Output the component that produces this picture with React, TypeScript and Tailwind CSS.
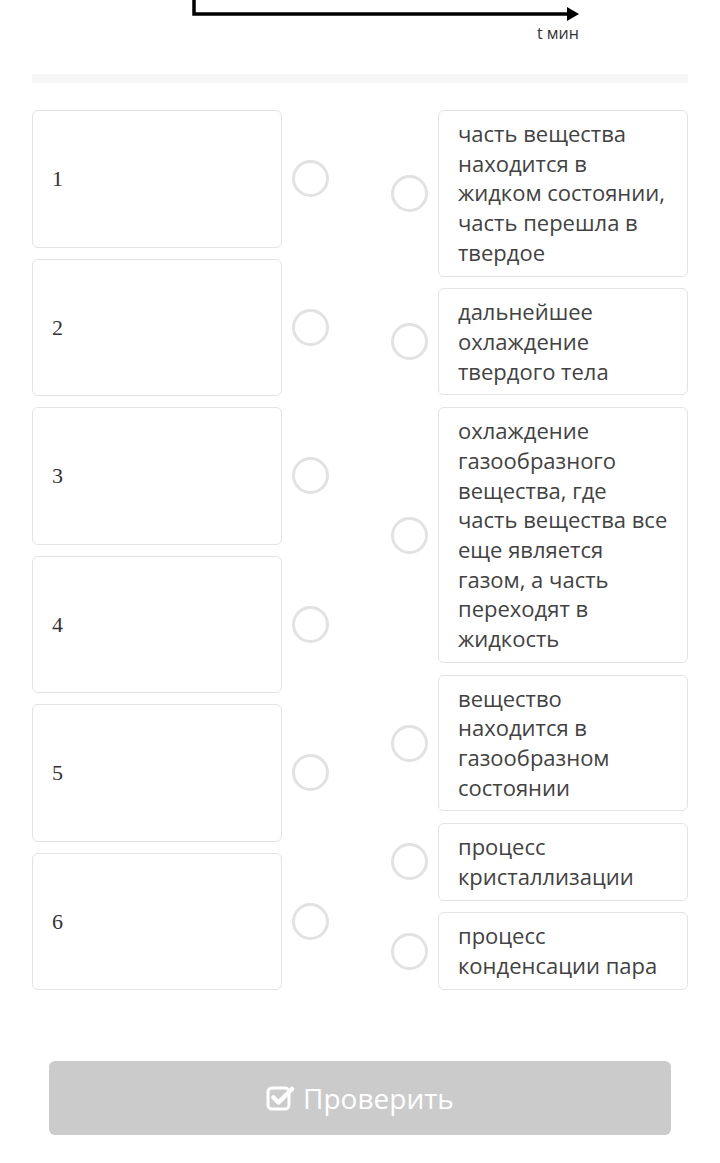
import React from 'react'

const left = ['1', '2', '3', '4', '5', '6']

const right = [
  'часть вещества находится в жидком состоянии, часть перешла в твердое',
  'дальнейшее охлаждение твердого тела',
  'охлаждение газообразного вещества, где часть вещества все еще является газом, а часть переходят в жидкость',
  'вещество находится в газообразном состоянии',
  'процесс кристаллизации',
  'процесс конденсации пара',
]

function Dot() {
  return <div className="h-[37px] w-[37px] shrink-0 rounded-full border-[3px] border-[#e1e3e2] bg-white" />
}

function CheckSquare() {
  return (
    <svg width="29" height="27" viewBox="0 0 29 27" fill="none">
      <rect x="2" y="3" width="21" height="21" rx="4" stroke="white" strokeWidth="3" />
      <path d="M7.5 12.5 L12.5 17.5 L26 4" stroke="white" strokeWidth="4.5" strokeLinecap="round" strokeLinejoin="round" />
    </svg>
  )
}

export default function App() {
  return (
    <div className="relative h-[1163px] w-[720px] overflow-hidden bg-white" style={{ fontFamily: '"Open Sans", "Liberation Sans", sans-serif' }}>
      {/* graph axis tail */}
      <div className="relative h-[74px]">
        <svg width="720" height="74" className="absolute left-0 top-0">
          <path d="M194 0 V14 H570" stroke="black" strokeWidth="3.5" fill="none" />
          <path d="M567 7 L579 14 L567 21 Z" fill="black" />
        </svg>
        <span className="absolute left-[537px] top-[24px] text-[16px] leading-[18px] text-[#333]">t мин</span>
      </div>

      <div className="mx-[32px] h-[9px] bg-[#f6f6f6]" />

      <div className="mt-[27px] flex justify-between px-[32px]">
        <div className="flex flex-col gap-[11px]">
          {left.map(n => (
            <div key={n} className="flex items-center gap-[10px]">
              <div className="flex h-[137.5px] w-[250px] items-center rounded-[6px] border border-[#e3e3e3] px-[19px] text-[22px] text-[#333]" style={{ fontFamily: '"Liberation Serif", "DejaVu Serif", serif' }}>
                {n}
              </div>
              <Dot />
            </div>
          ))}
        </div>

        <div className="flex flex-col gap-[11.8px]">
          {right.map(t => (
            <div key={t} className="flex items-center gap-[10px]">
              <Dot />
              <div className="w-[250px] rounded-[6px] border border-[#e3e3e3] py-[8px] pl-[19px] pr-[17px] text-[22px] leading-[29.7px] text-[#424242]">
                {t}
              </div>
            </div>
          ))}
        </div>
      </div>

      <div className="mx-[49px] mt-[71px] flex h-[74px] items-center justify-center gap-[8px] rounded-[6px] bg-[#cbcbcb] text-[28px] text-white">
        <CheckSquare />
        <span>Проверить</span>
      </div>
    </div>
  )
}
